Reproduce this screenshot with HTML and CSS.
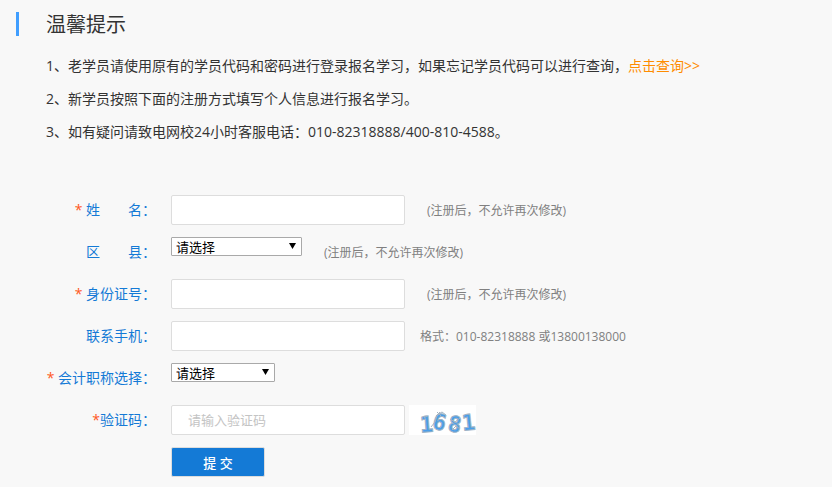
FILE: index.html
```html
<!DOCTYPE html>
<html lang="zh-CN">
<head>
  <meta charset="UTF-8">
  <meta name="viewport" content="width=device-width, initial-scale=1.0">
  <title>学员注册</title>
  <link rel="stylesheet" href="styles.css">
</head>
<body>
  <div class="container">
    <h1>温馨提示</h1>
    <div class="tips">
      <p>1、老学员请使用原有的学员代码和密码进行登录报名学习，如果忘记学员代码可以进行查询，<a href="#">点击查询&gt;&gt;</a></p>
      <p>2、新学员按照下面的注册方式填写个人信息进行报名学习。</p>
      <p>3、如有疑问请致电网校24小时客服电话：010-82318888/400-810-4588。</p>
    </div>

    <form id="registerForm">
      <div class="row">
        <label for="name"><span class="required">*</span> 姓　　名：</label>
        <input type="text" id="name" name="name">
        <span class="hint">(注册后，不允许再次修改)</span>
      </div>
      <div class="row">
        <label for="area">区　　县：</label>
        <div class="select area">
          <select id="area" name="area">
            <option>请选择</option>
          </select>
        </div>
        <span class="hint">(注册后，不允许再次修改)</span>
      </div>
      <div class="row">
        <label for="idcard"><span class="required">*</span> 身份证号：</label>
        <input type="text" id="idcard" name="idcard">
        <span class="hint">(注册后，不允许再次修改)</span>
      </div>
      <div class="row">
        <label for="phone">联系手机：</label>
        <input type="text" id="phone" name="phone">
        <span class="hint format">格式：010-82318888 或13800138000</span>
      </div>
      <div class="row">
        <label for="rank"><span class="required">*</span> 会计职称选择：</label>
        <div class="select rank">
          <select id="rank" name="rank">
            <option>请选择</option>
          </select>
        </div>
      </div>
      <div class="row">
        <label for="code"><span class="required">*</span>验证码：</label>
        <input type="text" id="code" name="code" class="code" placeholder="请输入验证码">
        <svg class="captcha" width="67" height="30" viewBox="0 0 67 30" role="img" aria-label="验证码">
          <rect width="67" height="30" fill="#fff"/>
          <g class="digits">
            <text x="11" y="27" transform="rotate(-4 18 20)">1</text>
            <text x="24" y="25" transform="rotate(14 31 17)">6</text>
            <text x="39" y="27" transform="rotate(10 46 20)">8</text>
            <text x="53" y="25" transform="rotate(-6 60 18)">1</text>
          </g>
          <path d="M22 22l4-5 2-7 5-3 4 3M27 11l4-4M28 7l5 5M41 14l5 3 5-4M43 25l4-4 4 3M15 13l3-2" fill="none" stroke="#a4b4c2" stroke-width="1"/>
        </svg>
      </div>
      <div class="row actions">
        <button type="submit">提 交</button>
      </div>
    </form>
  </div>
</body>
</html>
```

FILE: styles.css
```css
body {
  font-family: "Open Sans", "Noto Sans CJK SC", sans-serif;
  font-size: 14px;
  background-color: #f8f8f8;
  color: #333;
  margin: 0;
}
.container {
  padding: 12px 16px 0;
}
h1 {
  margin: 0;
  padding: 2px 0 0 27px;
  border-left: 3px solid #409eff;
  font-size: 20px;
  font-weight: normal;
  line-height: 22px;
}
.tips {
  margin: 13px 0 47px;
  padding-left: 30px;
}
.tips p {
  margin: 0;
  line-height: 33px;
}
.tips a {
  color: #ff8c00;
  text-decoration: none;
}
.row {
  display: flex;
  align-items: flex-start;
  height: 30px;
  margin-bottom: 12px;
}
.row label {
  width: 140px;
  margin-right: 15px;
  color: #147ad6;
  line-height: 30px;
  text-align: right;
  white-space: nowrap;
}
.required {
  color: #ff5722;
}
.row input {
  box-sizing: border-box;
  width: 234px;
  height: 30px;
  padding: 0 16px;
  border: 1px solid #ddd;
  border-radius: 2px;
  background: #fff;
  font-family: inherit;
  font-size: 13px;
}
.row input::placeholder {
  color: #c4c4c4;
}
.select {
  position: relative;
}
.select select {
  display: block;
  width: 100%;
  height: 19px;
  padding: 1px 4px 0;
  border: 1px solid #a9a9a9;
  border-radius: 1px;
  background: #fff;
  color: #000;
  font-family: inherit;
  font-size: 13px;
  line-height: 17px;
  appearance: none;
}
/* drop-down arrow */
.select::after {
  content: "";
  position: absolute;
  top: 6px;
  right: 6px;
  width: 7px;
  height: 6px;
  background: #000;
  clip-path: polygon(0 0, 100% 0, 50% 100%);
  pointer-events: none;
}
.area {
  width: 131px;
}
.rank {
  width: 104px;
}
.hint {
  margin-left: 22px;
  color: #808080;
  font-size: 12px;
  line-height: 32px;
}
.hint.format {
  margin-left: 15px;
}
.captcha {
  margin-left: 4px;
  overflow: visible;
}
.digits {
  fill: #4a9eea;
  stroke: #9fb3c6;
  stroke-width: 1px;
  font-family: "DejaVu Sans Mono", monospace;
  font-size: 22px;
  font-weight: bold;
}
.actions {
  padding-left: 155px;
}
button {
  width: 94px;
  height: 30px;
  padding: 0;
  border: 1px solid #ddd;
  border-radius: 2px;
  background-color: #147ad6;
  color: #fff;
  font-family: inherit;
  font-size: 13px;
  font-weight: 500;
  cursor: pointer;
}
```
